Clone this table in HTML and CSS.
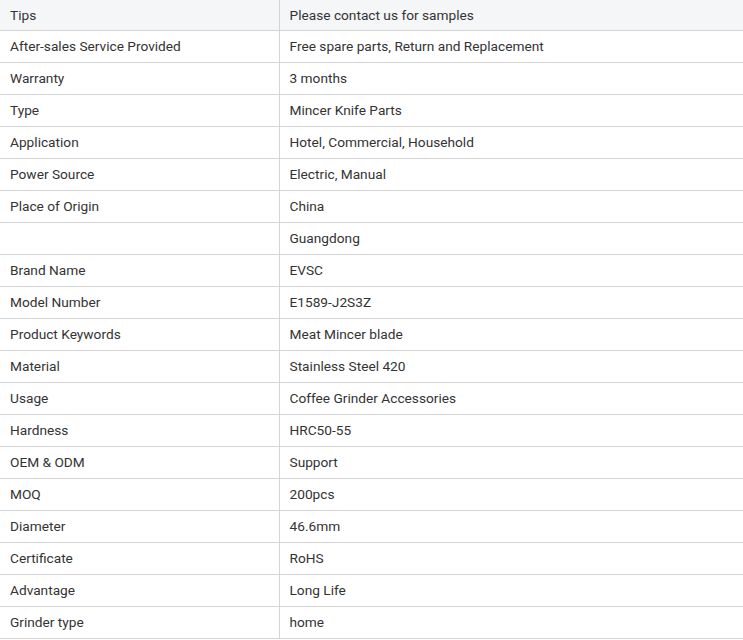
FILE: index.html
```html
<!DOCTYPE html>
<html>
<head>
<meta charset="utf-8">
<link rel="stylesheet" href="styles.css">
</head>
<body>
<table class="spec">
<tbody>
<tr class="head"><td class="k">Tips</td><td class="v">Please contact us for samples</td></tr>
<tr><td class="k">After-sales Service Provided</td><td class="v">Free spare parts, Return and Replacement</td></tr>
<tr><td class="k">Warranty</td><td class="v">3 months</td></tr>
<tr><td class="k">Type</td><td class="v">Mincer Knife Parts</td></tr>
<tr><td class="k">Application</td><td class="v">Hotel, Commercial, Household</td></tr>
<tr><td class="k">Power Source</td><td class="v">Electric, Manual</td></tr>
<tr><td class="k">Place of Origin</td><td class="v">China</td></tr>
<tr><td class="k"></td><td class="v">Guangdong</td></tr>
<tr><td class="k">Brand Name</td><td class="v">EVSC</td></tr>
<tr><td class="k">Model Number</td><td class="v">E1589-J2S3Z</td></tr>
<tr><td class="k">Product Keywords</td><td class="v">Meat Mincer blade</td></tr>
<tr><td class="k">Material</td><td class="v">Stainless Steel 420</td></tr>
<tr><td class="k">Usage</td><td class="v">Coffee Grinder Accessories</td></tr>
<tr><td class="k">Hardness</td><td class="v">HRC50-55</td></tr>
<tr><td class="k">OEM &amp; ODM</td><td class="v">Support</td></tr>
<tr><td class="k">MOQ</td><td class="v">200pcs</td></tr>
<tr><td class="k">Diameter</td><td class="v">46.6mm</td></tr>
<tr><td class="k">Certificate</td><td class="v">RoHS</td></tr>
<tr><td class="k">Advantage</td><td class="v">Long Life</td></tr>
<tr><td class="k">Grinder type</td><td class="v">home</td></tr>
</tbody>
</table>
</body>
</html>
```
FILE: styles.css
```css
html, body {
  margin: 0;
  padding: 0;
  background: #ffffff;
}
.spec {
  width: 743px;
  border-collapse: collapse;
  table-layout: fixed;
  font-family: Roboto, "Liberation Sans", sans-serif;
  font-size: 13.7px;
  color: #333333;
}
.spec td {
  height: 32px;
  padding: 0 10px;
  border-bottom: 1px solid #d4d4d4;
  vertical-align: middle;
  white-space: nowrap;
  box-sizing: border-box;
}
.spec td.k {
  width: 279px;
  border-right: 1px solid #d4d4d4;
}
.spec tr.head td {
  height: 30px;
  background: #f5f6f8;
}
```
